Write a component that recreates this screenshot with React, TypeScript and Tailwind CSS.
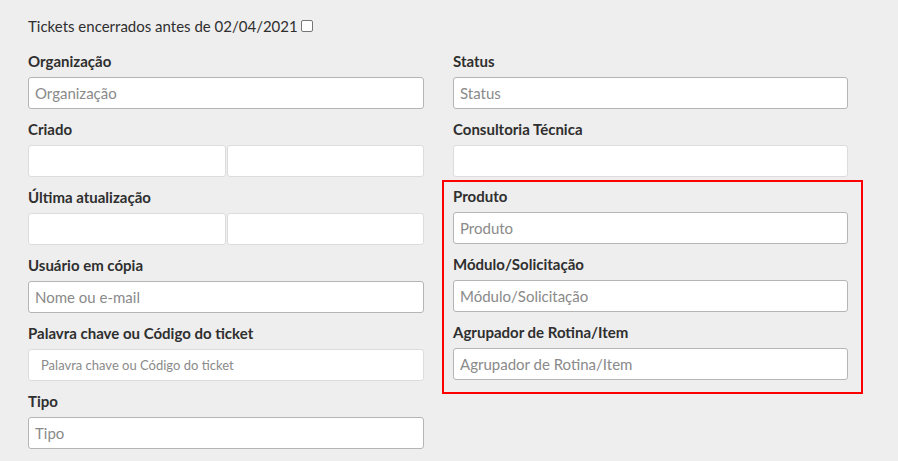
import React from 'react';

type FieldProps = {
  label: string;
  placeholder?: string;
  light?: boolean;
  small?: boolean;
  className?: string;
  children?: React.ReactNode;
};

const Field: React.FC<FieldProps> = ({ label, placeholder, light, small, className = 'mb-[10px]', children }) => (
  <div className={className}>
    <label className="block h-[21px] leading-[20px] text-[15px] font-bold text-[#2f2f2f]">{label}</label>
    <div className="mt-[5px]">
      {children ?? (
        <input
          type="text"
          placeholder={placeholder}
          className={`block h-[32px] w-full rounded-[3px] border bg-white text-[#555] placeholder:text-[#8a8a8a] outline-none ${
            light ? 'border-[#dcdcdc]' : 'border-[#b5b5b5]'
          } ${small ? 'px-[12px] text-[13px]' : 'px-[6px] text-[15px]'}`}
        />
      )}
    </div>
  </div>
);

const DatePair: React.FC = () => (
  <div className="flex gap-[1px]">
    <input type="text" className="block h-[32px] w-0 min-w-0 flex-1 rounded-[3px] border border-[#dcdcdc] bg-white outline-none" />
    <input type="text" className="block h-[32px] w-0 min-w-0 flex-1 rounded-[3px] border border-[#dcdcdc] bg-white outline-none" />
  </div>
);

export default function App() {
  return (
    <div className="h-[461px] w-[898px] overflow-hidden bg-[#eeeeee] pl-[28px] pt-[15px] font-['Lato','Liberation_Sans',sans-serif] text-[#2f2f2f]">
      <div className="mb-[14px] flex h-[22px] items-center text-[15px] leading-[22px]">
        <span>Tickets encerrados antes de 02/04/2021</span>
        <span className="ml-[3px] inline-block h-[12px] w-[12px] rounded-[2px] border border-[#767676] bg-white" />
      </div>

      <div className="flex items-start">
        <div className="w-[396px]">
          <Field label="Organização" placeholder="Organização" />
          <Field label="Criado">
            <DatePair />
          </Field>
          <Field label="Última atualização">
            <DatePair />
          </Field>
          <Field label="Usuário em cópia" placeholder="Nome ou e-mail" />
          <Field label="Palavra chave ou Código do ticket" placeholder="Palavra chave ou Código do ticket" light small />
          <Field label="Tipo" placeholder="Tipo" />
        </div>

        <div className="ml-[18px] w-[421px]">
          <div className="ml-[11px] w-[395px]">
            <Field label="Status" placeholder="Status" />
            <Field label="Consultoria Técnica" light className="mb-[3px]">
              <input type="text" className="block h-[32px] w-full rounded-[3px] border border-[#dcdcdc] bg-white outline-none" />
            </Field>
          </div>
          <div className="border-2 border-[#ff0000] pb-[12px] pl-[9px] pt-[4px]">
            <div className="w-[395px]">
              <Field label="Produto" placeholder="Produto" />
              <Field label="Módulo/Solicitação" placeholder="Módulo/Solicitação" />
              <Field label="Agrupador de Rotina/Item" placeholder="Agrupador de Rotina/Item" className="mb-0" />
            </div>
          </div>
        </div>
      </div>
    </div>
  );
}
